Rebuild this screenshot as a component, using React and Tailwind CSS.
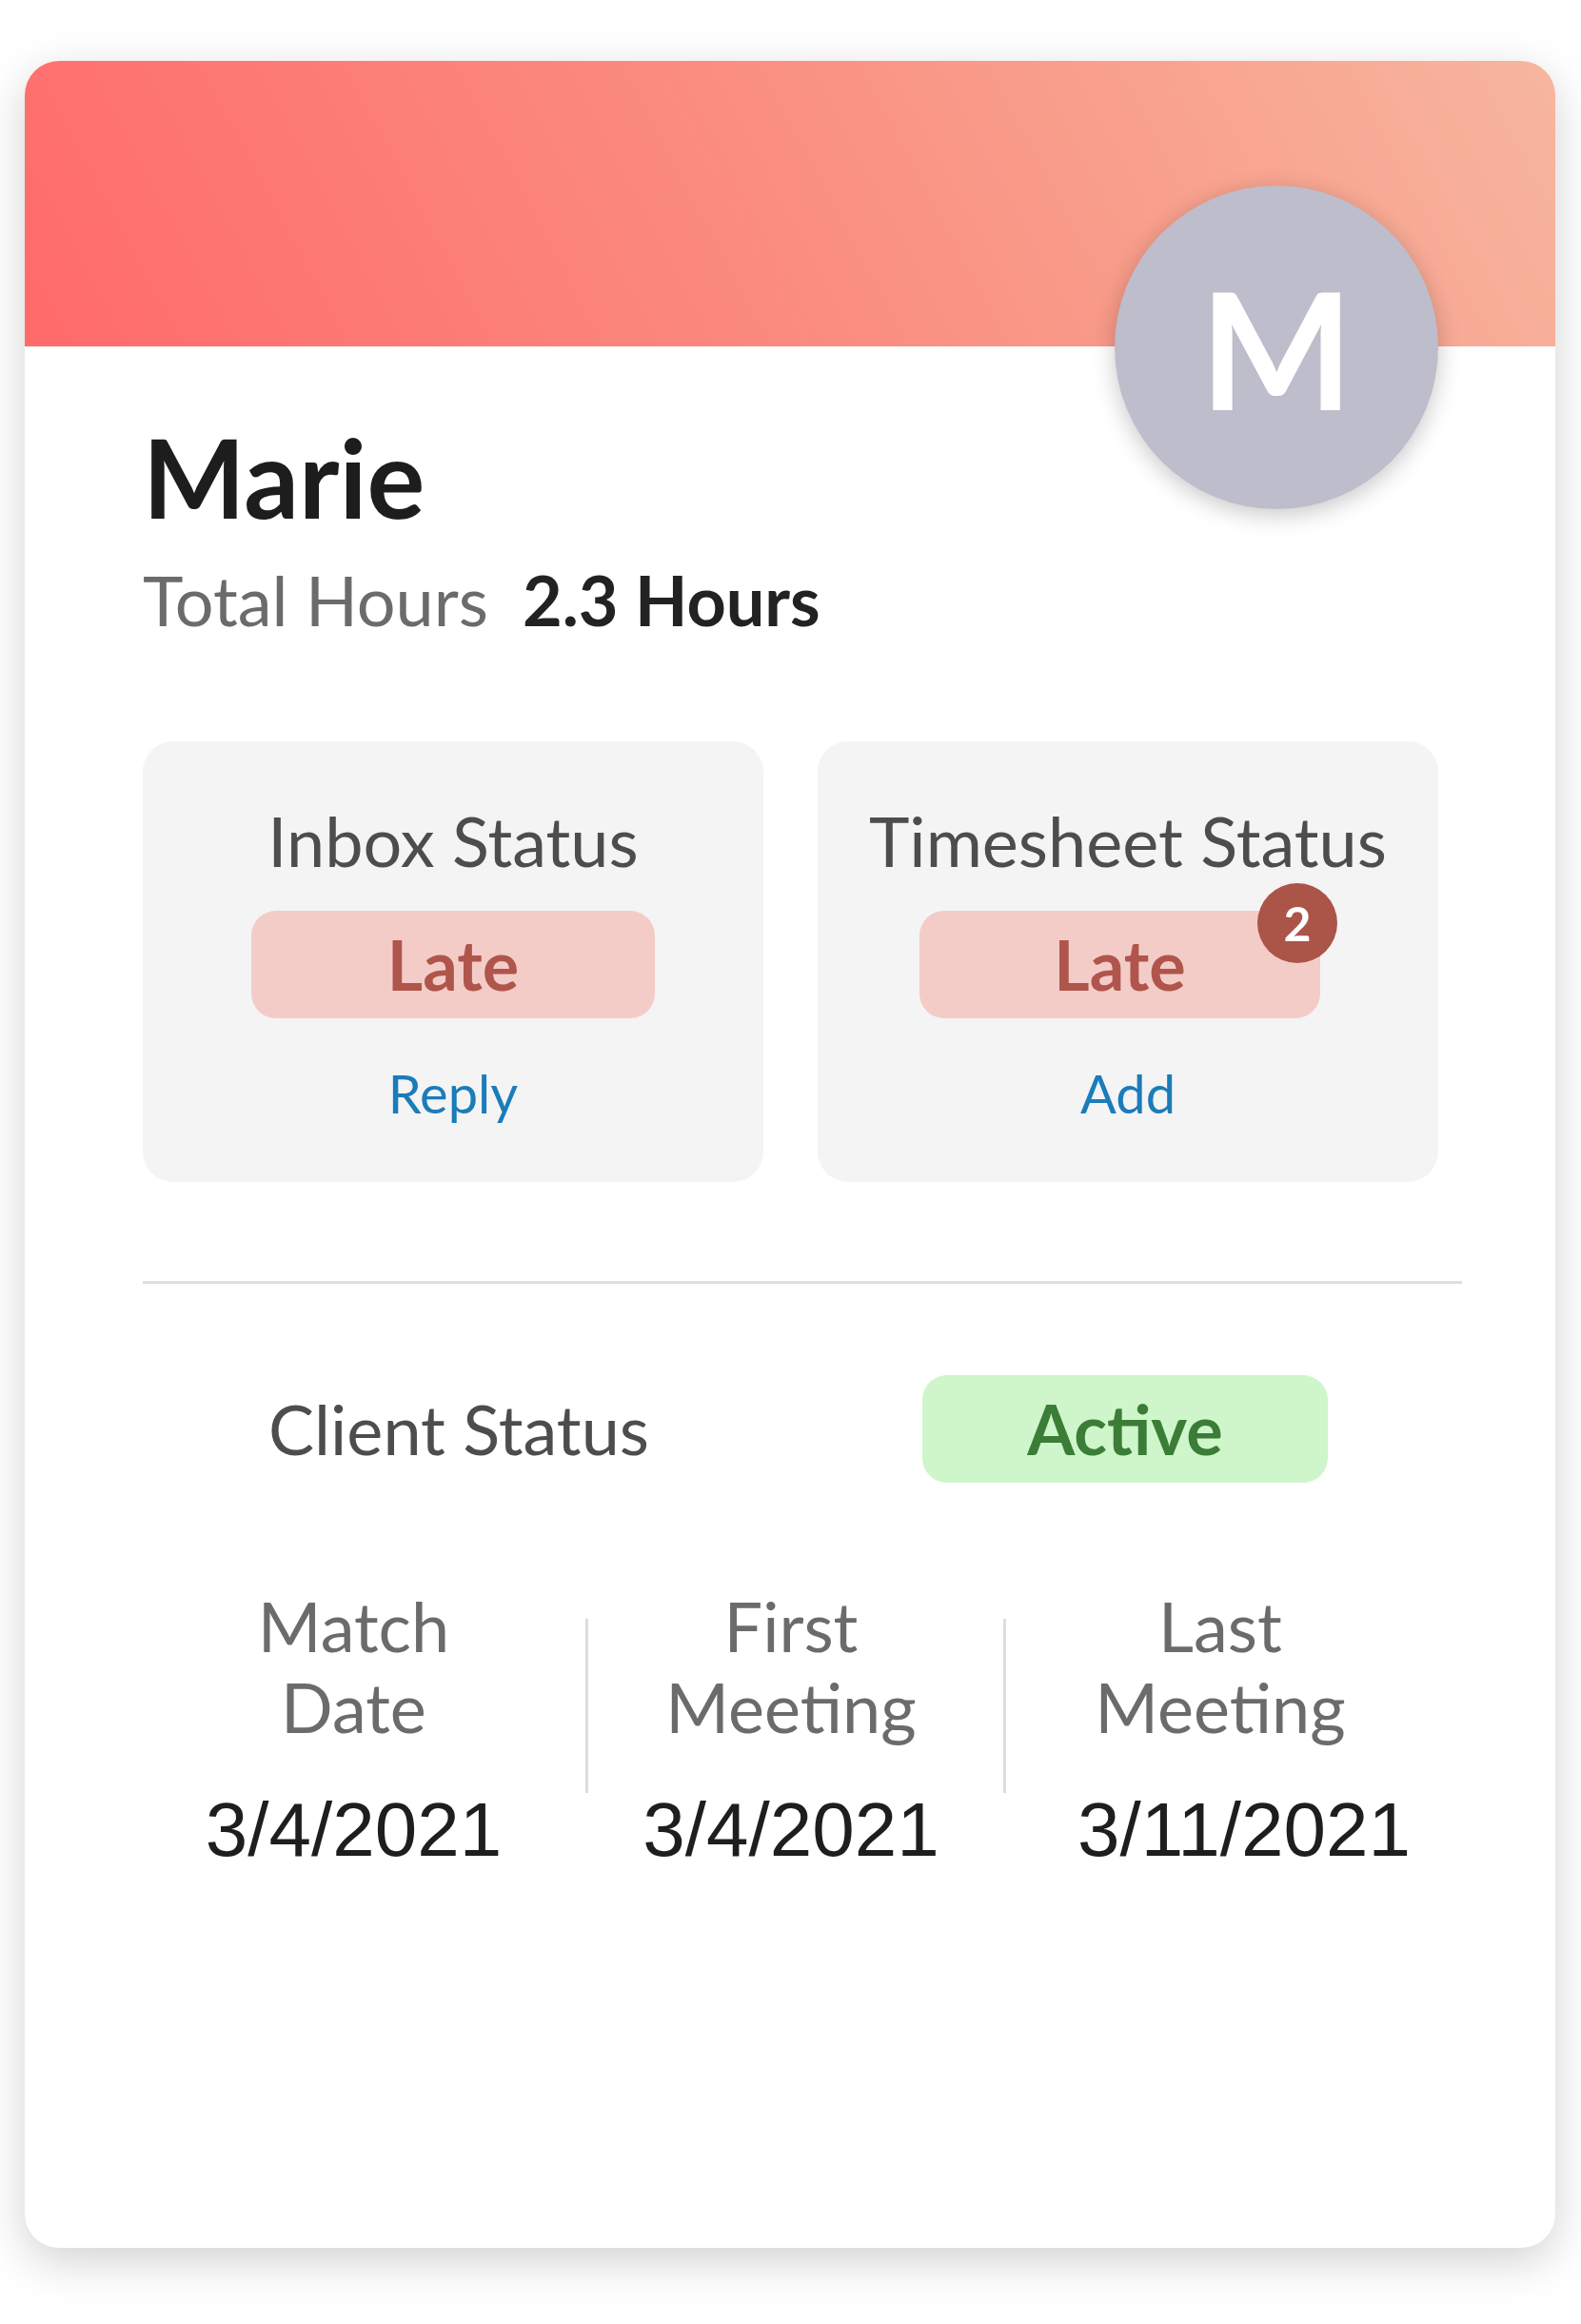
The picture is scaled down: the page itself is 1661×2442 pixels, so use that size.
import React from 'react';

const StatusBox = ({ title, status, action, badge, pillClass }) => (
    <div className="h-[463px] rounded-[32px] bg-[#f4f4f4] flex flex-col items-center pt-[61px]">
        <p className="text-[72px] leading-[1.2] text-[#4d4d4d]">{title}</p>
        <div
            className={`relative mt-[30px] h-[113px] rounded-[26px] bg-[#f3ccc8] flex items-center justify-center text-[72px] leading-[1.2] font-bold text-[#b0554b] ${pillClass}`}
        >
            {status}
            {badge && (
                <span className="absolute -right-[18px] -top-[29px] w-[84px] h-[84px] rounded-full bg-[#ab5448] text-white text-[50px] font-bold leading-none flex items-center justify-center">
                    {badge}
                </span>
            )}
        </div>
        <a href="#" className="mt-[45px] text-[56px] leading-[1.2] text-[#1b7cba]">
            {action}
        </a>
    </div>
);

const DateColumn = ({ lines, date, widthClass, dateClass = '' }) => (
    <div className={`flex flex-col items-center text-center ${widthClass}`}>
        <p className="text-[72px] leading-[85px] text-[#6b6b6b]">
            {lines[0]}
            <br />
            {lines[1]}
        </p>
        <p className={`mt-[39px] font-['Liberation_Sans',Arial,sans-serif] text-[80px] leading-[1.2] text-[#1e1e1e] ${dateClass}`}>
            {date}
        </p>
    </div>
);

const VDivider = () => <div className="mt-[35px] h-[183px] w-[3px] shrink-0 bg-[#e3dcdc]" />;

export default function App() {
    return (
        <div className="min-h-screen bg-white pt-[64px] pl-[26px] font-['Lato',sans-serif]">
            <div className="relative w-[1608px] h-[2298px] rounded-[36px] bg-white overflow-hidden shadow-[0_14px_48px_rgba(0,0,0,0.18)]">
                {/* Header band */}
                <div className="h-[300px] bg-[linear-gradient(62deg,#ff6a6a_0%,#fa8e80_50%,#f7b69e_100%)]" />

                {/* Avatar */}
                <div className="absolute right-[123px] top-[131px] w-[340px] h-[340px] rounded-full bg-[#bebdcb] shadow-[0_6px_24px_rgba(0,0,0,0.22)] flex items-center justify-center text-white text-[170px] font-bold leading-none">
                    M
                </div>

                <div className="pl-[124px] pr-[123px] pt-[69px]">
                    <h1 className="text-[114px] leading-[1.2] font-bold text-[#1d1d1d]">Marie</h1>
                    <div className="mt-[17px] flex text-[72px] leading-[1.2]">
                        <span className="text-[#6b6b6b]">Total Hours</span>
                        <span className="ml-[36px] font-bold text-[#222]">2.3 Hours</span>
                    </div>

                    {/* Status boxes */}
                    <div className="mt-[106px] grid grid-cols-2 gap-[57px]">
                        <StatusBox title="Inbox Status" status="Late" action="Reply" pillClass="w-[424px]" />
                        <StatusBox title="Timesheet Status" status="Late" action="Add" badge="2" pillClass="w-[421px] mr-[17px]" />
                    </div>

                    <div className="mt-[104px] mr-[-25px] h-[3px] bg-[#e3dcdc]" />

                    {/* Client status */}
                    <div className="mt-[96px] grid grid-cols-2 gap-[57px] items-center">
                        <p className="pl-[12px] text-center text-[72px] leading-[1.2] text-[#4d4d4d]">Client Status</p>
                        <div className="flex justify-center">
                            <div className="mr-[6px] w-[426px] h-[113px] rounded-[26px] bg-[#cff5ca] flex items-center justify-center text-[72px] leading-[1.2] font-bold text-[#3b7d37]">
                                Active
                            </div>
                        </div>
                    </div>

                    {/* Dates */}
                    <div className="mt-[108px] ml-[-22px] flex items-start">
                        <DateColumn lines={['Match', 'Date']} date="3/4/2021" widthClass="w-[487px]" />
                        <VDivider />
                        <DateColumn lines={['First', 'Meeting']} date="3/4/2021" widthClass="w-[436px] pr-[10px]" />
                        <VDivider />
                        <DateColumn lines={['Last', 'Meeting']} date="3/11/2021" widthClass="w-[450px]" dateClass="pl-[50px]" />
                    </div>
                </div>
            </div>
        </div>
    );
}
